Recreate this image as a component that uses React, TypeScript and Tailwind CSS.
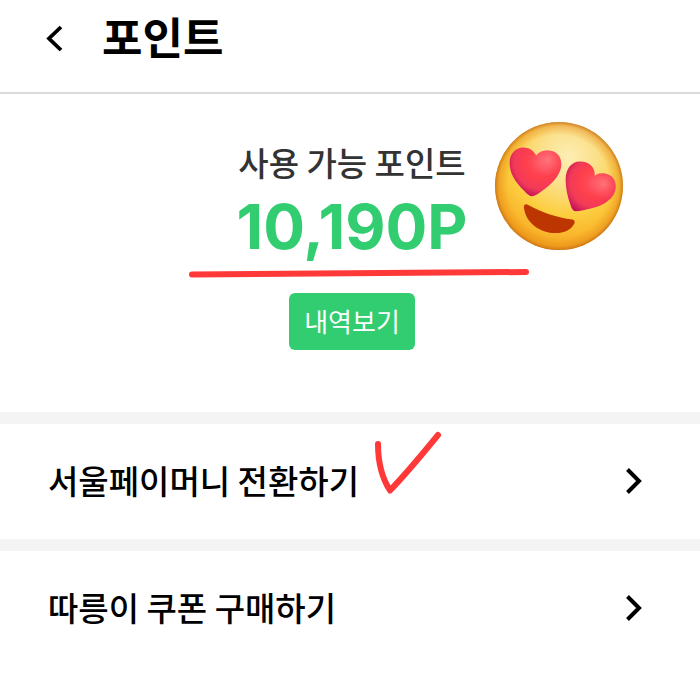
import React from "react";

const menuItems = [
  { title: "서울페이머니 전환하기", href: "#convert", checked: true },
  { title: "따릉이 쿠폰 구매하기", href: "#coupon", checked: false },
];

const ChevronRight: React.FC = () => (
  <svg width="16" height="26" viewBox="0 0 16 26" fill="none" stroke="#000" strokeWidth="4" aria-hidden="true">
    <path d="M1.5 1.5L13 13L1.5 24.5" />
  </svg>
);

const HeartEyes: React.FC<{ className?: string }> = ({ className }) => (
  <svg className={className} viewBox="45 34 386 386" aria-hidden="true">
    <defs>
      <radialGradient id="face" gradientUnits="userSpaceOnUse" cx="265" cy="140" r="290">
        <stop offset="0" stopColor="#fdeeb4" />
        <stop offset="0.3" stopColor="#fbe08a" />
        <stop offset="0.6" stopColor="#fcce40" />
        <stop offset="1" stopColor="#f6a21c" />
      </radialGradient>
      <radialGradient id="rim" gradientUnits="userSpaceOnUse" cx="238" cy="227" r="193">
        <stop offset="0.8" stopColor="#e8850f" stopOpacity="0" />
        <stop offset="0.94" stopColor="#e08214" stopOpacity="0.4" />
        <stop offset="1" stopColor="#c06a14" stopOpacity="0.8" />
      </radialGradient>
      <radialGradient id="heart" gradientUnits="userSpaceOnUse" cx="185" cy="155" r="118">
        <stop offset="0" stopColor="#ff5a68" />
        <stop offset="0.4" stopColor="#fe3f4c" />
        <stop offset="0.7" stopColor="#f23a58" />
        <stop offset="1" stopColor="#b00058" />
      </radialGradient>
      <radialGradient id="shine" gradientUnits="userSpaceOnUse" cx="205" cy="148" r="50">
        <stop offset="0" stopColor="#ff7478" />
        <stop offset="1" stopColor="#ff6070" stopOpacity="0" />
      </radialGradient>
      <radialGradient id="heart-right" gradientUnits="userSpaceOnUse" cx="344" cy="218" r="112">
        <stop offset="0" stopColor="#ff5560" />
        <stop offset="0.4" stopColor="#fe3f4c" />
        <stop offset="0.65" stopColor="#f23a58" />
        <stop offset="1" stopColor="#b00058" />
      </radialGradient>
      <radialGradient id="shine-right" gradientUnits="userSpaceOnUse" cx="372" cy="220" r="46">
        <stop offset="0" stopColor="#ff7478" />
        <stop offset="1" stopColor="#ff6070" stopOpacity="0" />
      </radialGradient>
      <path
        id="left-eye"
        d="M156 258C148 258 140 249 131 240C107 216 89 190 89 158C89 131 106 111 130 111C149 111 162 121 169 135C177 125 188 120 204 120C229 120 246 137 245 163C244 191 221 217 195 236C181 246 167 258 156 258Z"
      />
      <path
        id="right-eye"
        d="M288 303C280 303 276 294 273 285C263 257 258 232 258 208C258 175 275 153 302 153C330 153 347 171 346 196C354 190 363 188 374 189C397 191 411 208 409 232C406 265 373 285 337 294C319 298 301 303 288 303Z"
      />
    </defs>
    <circle cx="238" cy="227" r="193" fill="url(#face)" />
    <circle cx="238" cy="227" r="193" fill="url(#rim)" />
    <use href="#left-eye" fill="url(#heart)" />
    <use href="#left-eye" fill="url(#shine)" />
    <use href="#right-eye" fill="url(#heart-right)" />
    <use href="#right-eye" fill="url(#shine-right)" />
    <path
      d="M132 290C132 283 138 280 145 284C188 308 232 321 278 328C285 329 287 335 284 341C275 359 254 369 227 369C181 368 137 339 132 290Z"
      fill="#bd3500"
    />
  </svg>
);

const App: React.FC = () => {
  return (
    <div className="min-h-screen bg-white text-black font-['Noto_Sans_CJK_KR',sans-serif]">
      <header className="flex items-center gap-9 h-[94px] pl-11 pb-4 border-b-2 border-[#dadada]">
        <button type="button" aria-label="뒤로" className="p-0.5">
          <svg width="18" height="26" viewBox="0 0 18 26" fill="none" stroke="#000" strokeWidth="3.8" aria-hidden="true">
            <path d="M15 2L3 13.5L15 25" />
          </svg>
        </button>
        <h1 className="pb-1 text-[44px] leading-[56px] font-bold">포인트</h1>
      </header>

      {/* Balance */}
      <section className="relative flex flex-col items-center pt-[46px] pb-[62px] pl-1">
        <p className="text-[33px] leading-[44px] font-medium text-[#333]">사용 가능 포인트</p>
        <p className="mt-[9px] text-[62px] leading-[68px] font-bold text-[#32cd70] font-['Inter',sans-serif]">10,190P</p>
        <button
          type="button"
          className="mt-8 h-[57px] px-[15px] pb-0.5 rounded-md bg-[#32cd70] text-[26px] leading-8 text-white"
        >
          내역보기
        </button>
        <svg
          className="absolute left-1/2 top-[174px] -ml-[162px]"
          width="342"
          height="10"
          viewBox="0 0 342 10"
          fill="none"
          stroke="#ff3838"
          strokeWidth="6"
          strokeLinecap="round"
          aria-hidden="true"
        >
          <path d="M4 6.5C100 6 200 4 338 4" />
        </svg>
        <HeartEyes className="absolute left-1/2 top-7 ml-[145px] size-32" />
      </section>

      {/* Menu */}
      <nav>
        {menuItems.map((item) => (
          <a
            key={item.title}
            href={item.href}
            className="flex items-center justify-between h-[127px] pl-12 pr-[58px] pb-0.5 border-t-12 border-[#f4f4f4]"
          >
            <span className="relative pb-0.5 text-[33px] leading-[44px] font-medium">
              {item.title}
              {item.checked && (
                <svg
                  className="absolute left-full -top-7 ml-3.5"
                  width="70"
                  height="66"
                  viewBox="0 0 70 66"
                  fill="none"
                  stroke="#ff3838"
                  strokeWidth="6"
                  strokeLinecap="round"
                  strokeLinejoin="round"
                  aria-hidden="true"
                >
                  <path d="M5 14C5 33 9 48 17 60.5C30 47 47 27 65 5" />
                </svg>
              )}
            </span>
            <ChevronRight />
          </a>
        ))}
      </nav>
    </div>
  );
};

export default App;
